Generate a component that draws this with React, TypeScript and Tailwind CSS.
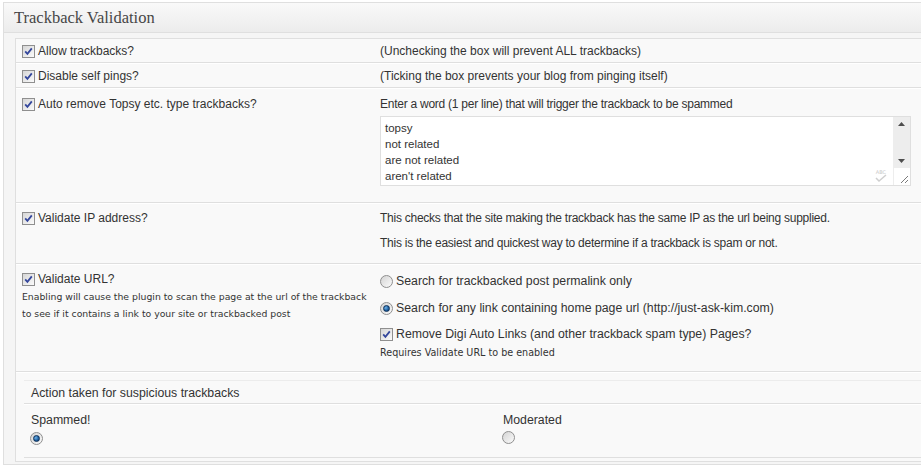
import React from "react"

function Check() {
  return (
    <span className="inline-flex h-[13px] w-[13px] shrink-0 items-center justify-center border border-[#8f8f8f] bg-gradient-to-br from-[#d6d6d6] to-[#fbfbfb]">
      <svg viewBox="0 0 11 11" className="h-[11px] w-[11px]">
        <path d="M2.2 5.4 L4.4 7.8 L8.8 2.4" fill="none" stroke="#34479c" strokeWidth="1.8" />
      </svg>
    </span>
  )
}

function Radio({ checked = false }: { checked?: boolean }) {
  return (
    <span className="inline-flex h-[13px] w-[13px] shrink-0 items-center justify-center rounded-full border border-[#8f8f8f] bg-gradient-to-br from-[#d4d4d4] to-[#fbfbfb]">
      {checked && (
        <span className="h-[7px] w-[7px] rounded-full border border-[#0d2f57] bg-[radial-gradient(circle_at_35%_35%,#6fb3ea,#1b5c9c_60%,#0f3b6a)]" />
      )}
    </span>
  )
}

function Label({ children }: { children: React.ReactNode }) {
  return (
    <div className="flex h-[15px] items-center gap-[3px] leading-[15px]">
      <Check />
      <span>{children}</span>
    </div>
  )
}

function Row({ left, right, className = "" }: { left: React.ReactNode; right: React.ReactNode; className?: string }) {
  return (
    <div className={"flex border-t border-b border-t-white border-b-[#dfdfdf] " + className}>
      <div className="w-[358px] shrink-0 pl-[6px]">{left}</div>
      <div className="flex-1 pl-[6px]">{right}</div>
    </div>
  )
}

function TextBox() {
  const words = ["topsy", "not related", "are not related", "aren't related"]
  return (
    <div className="mt-[4px] flex h-[70px] w-[531px] border border-[#dfdfdf] bg-white">
      <div className="relative flex-1 pl-[4px] pt-[3px] text-[11.5px] leading-[16px] text-[#333]">
        {words.map((w) => (
          <div key={w}>{w}</div>
        ))}
        <div className="absolute bottom-[3px] right-[6px] flex flex-col items-center text-[#c8c8c8]">
          <span className="font-['DejaVu_Sans',sans-serif] text-[5px] leading-[6px]">ABC</span>
          <svg viewBox="0 0 12 8" className="-mt-[1px] h-[8px] w-[12px]">
            <path d="M1 4 L4 7 L11 1" fill="none" stroke="#cfcfcf" strokeWidth="1.5" />
          </svg>
        </div>
      </div>
      <div className="flex w-[17px] flex-col">
        <div className="flex flex-1 flex-col items-center justify-between bg-[#ededed] py-[5px]">
          <svg viewBox="0 0 7 4" className="h-[4px] w-[7px]"><path d="M3.5 0 L7 4 L0 4 Z" fill="#4d4d4d" /></svg>
          <svg viewBox="0 0 7 4" className="h-[4px] w-[7px]"><path d="M0 0 L7 0 L3.5 4 Z" fill="#4d4d4d" /></svg>
        </div>
        <div className="relative h-[17px] border-l border-[#ededed] bg-white">
          <svg viewBox="0 0 8 8" className="absolute bottom-[2px] right-[2px] h-[8px] w-[8px]">
            <path d="M8 1 L1 8 M8 5 L5 8" stroke="#7a7a7a" strokeWidth="1" />
          </svg>
        </div>
      </div>
    </div>
  )
}

export default function App() {
  return (
    <div className="h-[467px] w-[921px] overflow-hidden bg-white font-['Liberation_Sans',Arial,sans-serif] text-[12px] text-[#333]">
      <div className="ml-[3px] mt-[2px] w-[940px] border border-[#dfdfdf] bg-[#f5f5f5]">
        <div className="flex h-[30px] items-center border-b border-[#dfdfdf] bg-gradient-to-b from-[#f9f9f9] to-[#ececec] pl-[10px] pt-[2px] font-['Liberation_Serif',Georgia,serif] text-[16.5px] text-[#464646]">
          Trackback Validation
        </div>
        <div className="ml-[11px] mt-[5px] border border-[#dfdfdf] bg-[#f9f9f9] pb-[3px]">
          <Row
            className="h-[24px] border-t-0 pt-[5px]"
            left={<Label>Allow trackbacks?</Label>}
            right={<div className="leading-[15px]">(Unchecking the box will prevent ALL trackbacks)</div>}
          />
          <Row
            className="h-[25px] pt-[5px]"
            left={<Label>Disable self pings?</Label>}
            right={<div className="leading-[15px]">(Ticking the box prevents your blog from pinging itself)</div>}
          />
          <Row
            className="h-[115px] pt-[8px]"
            left={<Label>Auto remove Topsy etc. type trackbacks?</Label>}
            right={
              <div>
                <div className="leading-[15px] tracking-[-0.25px]">
                  Enter a word (1 per line) that will trigger the trackback to be spammed
                </div>
                <TextBox />
              </div>
            }
          />
          <Row
            className="h-[61px] pt-[7px]"
            left={<Label>Validate IP address?</Label>}
            right={
              <div className="leading-[15px] tracking-[-0.25px]">
                <p>This checks that the site making the trackback has the same IP as the url being supplied.</p>
                <p className="mt-[10px]">This is the easiest and quickest way to determine if a trackback is spam or not.</p>
              </div>
            }
          />
          <Row
            className="h-[108px] pt-[7px]"
            left={
              <div>
                <Label>Validate URL?</Label>
                <p className="mt-[1px] font-['DejaVu_Sans',Verdana,sans-serif] text-[9.3px] leading-[17px]">
                  Enabling will cause the plugin to scan the page at the url of the trackback
                  <br />
                  to see if it contains a link to your site or trackbacked post
                </p>
              </div>
            }
            right={
              <div className="pt-[2px] text-[12.3px] leading-[15px]">
                <div className="flex h-[15px] items-center gap-[3px]">
                  <Radio />
                  <span>Search for trackbacked post permalink only</span>
                </div>
                <div className="mt-[12px] flex h-[15px] items-center gap-[3px]">
                  <Radio checked />
                  <span>Search for any link containing home page url (http://just-ask-kim.com)</span>
                </div>
                <div className="mt-[11px]">
                  <Label>Remove Digi Auto Links (and other trackback spam type) Pages?</Label>
                </div>
                <p className="mt-[4px] font-['DejaVu_Sans',Verdana,sans-serif] text-[9.6px] leading-[14px]">
                  Requires Validate URL to be enabled
                </p>
              </div>
            }
          />
          <div className="border-t border-white pl-[8px] pt-[7px]">
            <div className="border-t border-[#ececec] text-[12.3px]">
              <div className="flex h-[23px] items-center border-b border-[#dfdfdf] pl-[7px] pt-[2px]">
                Action taken for suspicious trackbacks
              </div>
              <div className="flex h-[54px] border-t border-b border-t-white border-b-[#dfdfdf] pt-[8px]">
                <div className="w-[472px] pl-[7px] leading-[15px]">
                  <div>Spammed!</div>
                  <div className="ml-[-1px] mt-[3px]"><Radio checked /></div>
                </div>
                <div className="pl-[7px] leading-[15px]">
                  <div>Moderated</div>
                  <div className="ml-[-1px] mt-[3px]"><Radio /></div>
                </div>
              </div>
            </div>
          </div>
        </div>
        <div className="h-[2px]" />
      </div>
    </div>
  )
}
